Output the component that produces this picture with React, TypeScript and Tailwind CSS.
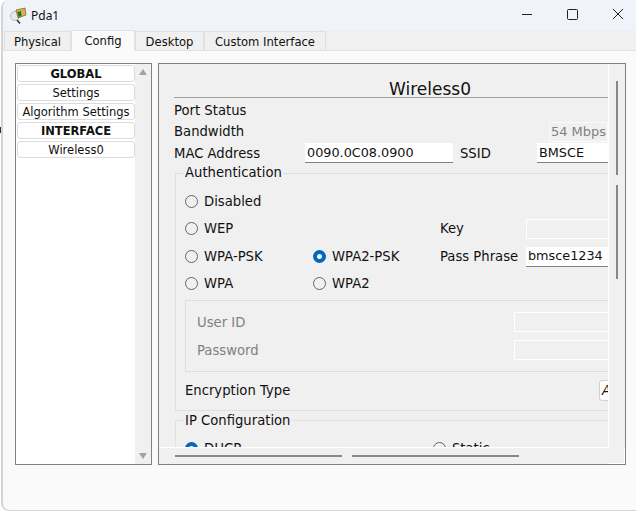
import React from "react"

const font = "font-['DejaVu_Sans',sans-serif] text-[13.2px] leading-none text-[#111]"

function PdaIcon() {
  return (
    <svg width="17" height="17" viewBox="0 0 17 17" className="shrink-0">
      <circle cx="5" cy="9" r="4.5" fill="#e8eaea" stroke="#b4bcbc" />
      <path d="M7 13 L10 16.5" stroke="#333" strokeWidth="1.5" />
      <path d="M6 3 L15 1 L16 8 L8 11 Z" fill="#d8b050" stroke="#7a5a20" strokeWidth="0.7" />
      <path d="M7.5 5 L11 4 L11.5 9 L8.5 10 Z" fill="#1c7a20" />
    </svg>
  )
}

function Tab({ label, active, w }: { label: string; active?: boolean; w: string }) {
  if (active) {
    return (
      <div className={`${w} h-[21px] -mb-px bg-[#fafafa] border border-b-0 border-[#e2e2e2] flex items-center justify-center pt-[2px] z-10`}>
        {label}
      </div>
    )
  }
  return (
    <div className={`${w} h-[19px] bg-[#f0f0f0] border border-b-0 border-[#e0e0e0] flex items-center justify-center pt-[3px]`}>
      {label}
    </div>
  )
}

function NavItem({ label, bold }: { label: string; bold?: boolean }) {
  return (
    <div className={`h-[17px] pt-[2px] bg-white border border-[#dcdcdc] rounded-[3px] flex items-center justify-center text-[11.5px] ${bold ? "font-bold" : ""}`}>
      {label}
    </div>
  )
}

function Radio({ label, checked, className }: { label: string; checked?: boolean; className?: string }) {
  return (
    <div className={`flex items-center gap-[6px] ${className ?? ""}`}>
      {checked ? (
        <span className="size-[13px] rounded-full bg-[#0067c0] flex items-center justify-center">
          <span className="size-[5px] rounded-full bg-white" />
        </span>
      ) : (
        <span className="size-[13px] rounded-full border border-[#666] bg-[#f0f0f0]" />
      )}
      <span>{label}</span>
    </div>
  )
}

function Field({ value, disabled, className }: { value?: string; disabled?: boolean; className?: string }) {
  return (
    <div
      className={`h-[20px] flex items-center px-[2px] pt-[1px] text-[12.8px] ${
        disabled ? "border border-white bg-[#f0f0f0]" : "bg-white border-b border-[#808080]"
      } ${className ?? ""}`}
    >
      {value}
    </div>
  )
}

function ScrollThumbV({ className }: { className: string }) {
  return <div className={`w-[2px] bg-[#888] ${className}`} />
}

export default function App() {
  return (
    <div className={`w-[636px] h-[512px] bg-white relative overflow-hidden ${font}`}>
      <div className="absolute left-0 top-[127px] w-px h-[6px] bg-[#333]" />
      <div className="h-[511px] ml-[1px] border-l-2 border-b border-[#d4d4d4] rounded-tl-lg rounded-bl-lg overflow-hidden bg-[#fafafa] flex flex-col">
        {/* title bar */}
        <div className="h-[30px] bg-[#f0f3f9] flex items-center shrink-0">
          <div className="ml-[7px] mr-[4px]">
            <PdaIcon />
          </div>
          <span className="font-['Noto_Sans',sans-serif] text-[12px] pt-[2px]">Pda1</span>
          <div className="ml-auto flex items-center mb-[2px]">
            <svg width="12" height="12" viewBox="0 0 12 12" className="mr-[34px]"><path d="M1 6.5H11" stroke="#222" /></svg>
            <svg width="12" height="12" viewBox="0 0 12 12" className="mr-[33px]"><rect x="0.5" y="1.5" width="10" height="10" rx="1" fill="none" stroke="#222" /></svg>
            <svg width="12" height="12" viewBox="0 0 12 12" className="mr-[12px]"><path d="M1 1L11 11M11 1L1 11" stroke="#222" /></svg>
          </div>
        </div>

        {/* tabs */}
        <div className="h-[21px] bg-[#f0f0f0] border-b border-[#e2e2e2] flex items-end pl-[1px] text-[11.6px] shrink-0">
          <Tab label="Physical" w="w-[67px]" />
          <Tab label="Config" active w="w-[64px]" />
          <Tab label="Desktop" w="w-[69px]" />
          <Tab label="Custom Interface" w="w-[122px]" />
        </div>

        {/* body */}
        <div className="flex gap-[6px] pl-[12px] pt-[12px] h-[414px]">
          {/* left list */}
          <div className="w-[137px] h-[402px] border border-[#80808a] bg-white flex shrink-0">
            <div className="flex-1 flex flex-col gap-[2px] pl-[1px] pt-[1px]">
              <NavItem label="GLOBAL" bold />
              <NavItem label="Settings" />
              <NavItem label="Algorithm Settings" />
              <NavItem label="INTERFACE" bold />
              <NavItem label="Wireless0" />
            </div>
            <div className="w-[16px] bg-[#f0f0f0] flex flex-col justify-between items-center py-[5px] shrink-0">
              <div className="border-x-[4px] border-x-transparent border-b-[6px] border-b-[#a3a3a3]" />
              <div className="border-x-[4px] border-x-transparent border-t-[6px] border-t-[#a3a3a3]" />
            </div>
          </div>

          {/* right panel */}
          <div className="w-[468px] h-[402px] border border-[#80808a] bg-[#f0f0f0] flex flex-col shrink-0">
            <div className="flex h-[384px]">
              <div className="w-[450px] border-r border-b border-white overflow-hidden">
                <div className="w-[540px] pl-[15px] flex flex-col">
                  <div className="h-[34px] w-[512px] border-b border-[#a0a0a0] flex items-end justify-center text-[17px] leading-[15px]">
                    Wireless0
                  </div>
                  <div className="h-[24px] flex items-center pt-[2px]">Port Status</div>
                  <div className="h-[19px] flex items-center justify-between w-[434px]">
                    <span>Bandwidth</span>
                    <div className="w-[59px] h-[20px] border border-[#fafafa] flex items-center justify-center text-[13px] text-[#808080]">54 Mbps</div>
                  </div>
                  <div className="h-[24px] flex items-center">
                    <span className="w-[131px] mt-[2px]">MAC Address</span>
                    <Field value="0090.0C08.0900" className="w-[148px]" />
                    <span className="ml-[7px] w-[77px] mt-[2px]">SSID</span>
                    <Field value="BMSCE" className="w-[100px]" />
                  </div>

                  <fieldset className="mt-[1px] ml-[1px] border border-[#e0e0e0] px-[9px] h-[245px] w-[480px]">
                    <legend className="px-[1px] ml-[-1px] pb-[1px]">Authentication</legend>
                    <div className="h-[21px] mt-[11px] flex items-center"><Radio label="Disabled" /></div>
                    <div className="h-[27px] mt-[3px] flex items-center">
                      <Radio label="WEP" className="w-[255px]" />
                      <span className="w-[86px]">Key</span>
                      <Field disabled className="w-[90px]" />
                    </div>
                    <div className="h-[27px] mt-[1px] flex items-center">
                      <Radio label="WPA-PSK" className="w-[128px]" />
                      <Radio label="WPA2-PSK" checked className="w-[127px]" />
                      <span className="w-[86px]">Pass Phrase</span>
                      <Field value="bmsce1234" className="w-[90px]" />
                    </div>
                    <div className="h-[27px] flex items-center">
                      <Radio label="WPA" className="w-[128px]" />
                      <Radio label="WPA2" />
                    </div>
                    <div className="mt-[3px] h-[72px] w-[470px] border border-[#dcdcdc] pl-[11px] text-[#808080] flex flex-col justify-center gap-[8px]">
                      <div className="h-[20px] flex items-center"><span className="w-[317px]">User ID</span><Field disabled className="w-[130px]" /></div>
                      <div className="h-[20px] flex items-center"><span className="w-[317px]">Password</span><Field disabled className="w-[130px]" /></div>
                    </div>
                    <div className="h-[36px] flex items-center">
                      <span className="w-[414px]">Encryption Type</span>
                      <div className="w-[40px] h-[21px] bg-white border border-[#d0d0d0] rounded-[3px] flex items-center pl-[2px] italic">AES</div>
                    </div>
                  </fieldset>

                  <fieldset className="mt-[3px] ml-[1px] border border-[#e0e0e0] px-[9px] h-[60px] w-[480px]">
                    <legend className="px-[1px] ml-[-1px]">IP Configuration</legend>
                    <div className="flex items-center mt-[15px]">
                      <Radio label="DHCP" checked className="w-[248px]" />
                      <Radio label="Static" />
                    </div>
                  </fieldset>
                </div>
              </div>
              <div className="w-[16px] flex flex-col items-center pt-[17px]">
                <ScrollThumbV className="h-[94px]" />
                <ScrollThumbV className="h-[94px] mt-[10px]" />
              </div>
            </div>
            <div className="h-[16px] flex items-center gap-[10px] pl-[16px]">
              <div className="w-[167px] h-[2px] bg-[#888]" />
              <div className="w-[167px] h-[2px] bg-[#888]" />
              <div className="ml-auto w-[17px] h-full border-r border-b border-white" />
            </div>
          </div>
        </div>
      </div>
    </div>
  )
}
